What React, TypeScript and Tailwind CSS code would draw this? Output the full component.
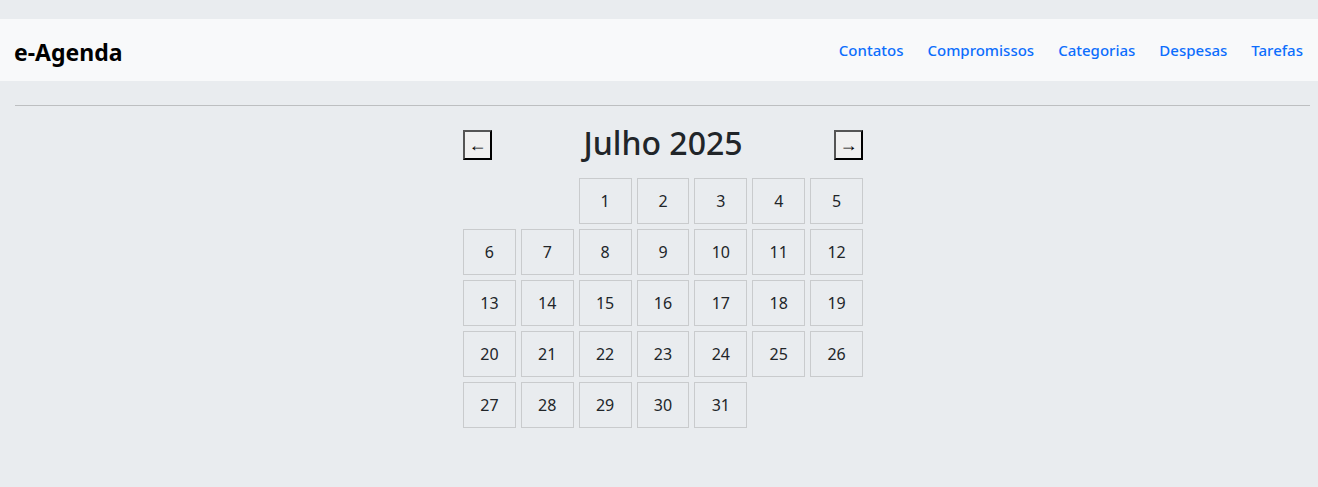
import React from "react";

const font = { fontFamily: '"Noto Sans", "Open Sans", sans-serif' };

export default function App() {
  const cells: (number | null)[] = [null, null];
  for (let i = 1; i <= 31; i++) cells.push(i);
  return (
    <div className="min-h-[487px] w-full bg-[#e9ecef] pt-[19px] text-[#212529]" style={font}>
      <nav className="flex h-[62px] items-center justify-between bg-[#f8f9fa] pl-[14px] pr-[15px]">
        <span className="mt-[4px] text-[23px] font-bold text-black">e-Agenda</span>
        <div className="flex gap-[24px] text-[15px] font-medium text-[#0d6efd]">
          <a>Contatos</a>
          <a>Compromissos</a>
          <a>Categorias</a>
          <a>Despesas</a>
          <a>Tarefas</a>
        </div>
      </nav>
      <div className="ml-[15px] mr-[8px] mt-[24px] h-px bg-[#bdbfc1]" />
      <div className="mx-auto mt-[16px] w-[408px] pl-[8px]">
        <div className="flex h-[42px] items-center justify-between">
          <button className="mt-[4px] flex h-[30px] w-[29px] items-center justify-center border-2 border-b-black border-l-[#555] border-r-black border-t-[#555] bg-[#f0f0f0] pb-[1px] text-[18px] leading-none text-black" style={{ fontFamily: '"Liberation Sans", sans-serif' }}>
            ←
          </button>
          <h2 className="text-[32px] font-medium leading-none">Julho 2025</h2>
          <button className="mt-[4px] flex h-[30px] w-[29px] items-center justify-center border-2 border-b-black border-l-[#555] border-r-black border-t-[#555] bg-[#f0f0f0] pb-[1px] text-[18px] leading-none text-black" style={{ fontFamily: '"Liberation Sans", sans-serif' }}>
            →
          </button>
        </div>
        <div className="mt-[14px] grid grid-cols-7 gap-[5px]">
          {cells.map((c, i) =>
            c === null ? (
              <div key={i} className="h-[46px]" />
            ) : (
              <div
                key={i}
                className="flex h-[46px] items-center justify-center border border-[#c9cbcd] text-[16px]"
              >
                {c}
              </div>
            )
          )}
        </div>
      </div>
    </div>
  );
}
